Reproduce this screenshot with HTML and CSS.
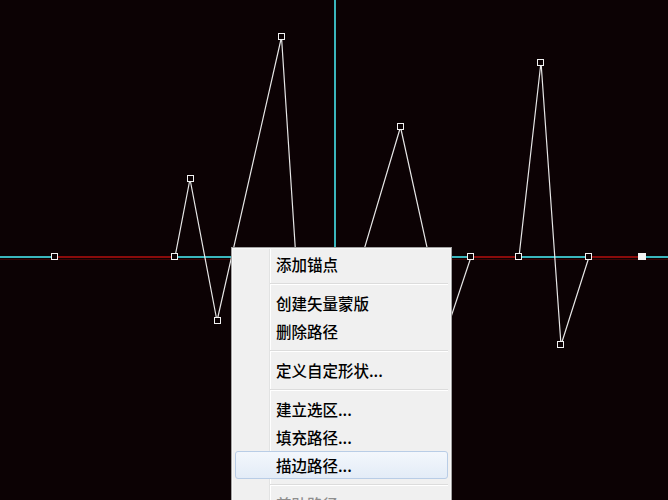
FILE: index.html
```html
<!DOCTYPE html>
<html>

<head>
    <title>Path Context Menu</title>
    <link rel="stylesheet" href="styles.css">
</head>

<body>
    <div class="canvas">
        <!-- Path and guides -->
        <svg class="art" width="668" height="500" viewBox="0 0 668 500">
            <line x1="335" y1="0" x2="335" y2="500" stroke="#3ab6bd" stroke-width="2" />
            <line x1="0" y1="259.5" x2="668" y2="259.5" stroke="#3a0606" stroke-width="1" />
            <line x1="0" y1="257" x2="668" y2="257" stroke="#3ab6bd" stroke-width="2" />
            <line x1="55" y1="257" x2="175" y2="257" stroke="#8a0b0b" stroke-width="2" />
            <line x1="471" y1="257" x2="519" y2="257" stroke="#8a0b0b" stroke-width="2" />
            <line x1="589" y1="257" x2="642" y2="257" stroke="#8a0b0b" stroke-width="2" />

            <g fill="none" stroke="#e6e6e6" stroke-width="1.2">
                <polyline points="175,257 190,179 217,321 281.5,37 298,290" />
                <polyline points="358,270 400.5,127 432,270" />
                <polyline points="471,257 445,335" />
                <polyline points="519,257 541,62 561,345 589,257" />
            </g>

            <g fill="#0c0204" stroke="#f2f2f2" stroke-width="1">
                <rect x="51.5" y="253.5" width="6" height="6" />
                <rect x="171.5" y="253.5" width="6" height="6" />
                <rect x="187.5" y="175.5" width="6" height="6" />
                <rect x="214.5" y="317.5" width="6" height="6" />
                <rect x="278.5" y="33.5" width="6" height="6" />
                <rect x="397.5" y="123.5" width="6" height="6" />
                <rect x="467.5" y="253.5" width="6" height="6" />
                <rect x="515.5" y="253.5" width="6" height="6" />
                <rect x="537.5" y="59.5" width="6" height="6" />
                <rect x="557.5" y="341.5" width="6" height="6" />
                <rect x="585.5" y="253.5" width="6" height="6" />
                <rect x="638.5" y="253.5" width="7" height="6" fill="#f4f4f4" />
            </g>
        </svg>

        <!-- Context menu -->
        <div class="menu">
            <div class="item">添加锚点</div>
            <div class="sep"></div>
            <div class="item">创建矢量蒙版</div>
            <div class="item">删除路径</div>
            <div class="sep"></div>
            <div class="item">定义自定形状...</div>
            <div class="sep"></div>
            <div class="item">建立选区...</div>
            <div class="item">填充路径...</div>
            <div class="item active">描边路径...</div>
            <div class="sep"></div>
            <div class="item disabled">剪贴路径...</div>
        </div>
    </div>
</body>

</html>
```

FILE: styles.css
```css
        body {
            margin: 0;
            background-color: #0c0204;
            font-family: 'Noto Sans CJK SC', 'Noto Sans', sans-serif;
            overflow: hidden;
        }

        .canvas {
            position: relative;
            width: 668px;
            height: 500px;
            overflow: hidden;
        }

        .art {
            position: absolute;
            left: 0;
            top: 0;
        }

        .menu {
            position: absolute;
            left: 231px;
            top: 247px;
            width: 219px;
            padding-top: 2px;
            border: 1px solid #a3a3a3;
            box-shadow: inset 0 0 0 1px #f8f8f8;
            background: linear-gradient(to right, #f0f0f0 37px, #e2e3e3 37px, #e2e3e3 38px, #fff 38px, #fff 39px, #f0f0f0 39px);
        }

        .item {
            height: 28px;
            line-height: 28px;
            margin: 0 3px;
            padding-left: 41px;
            font-size: 15.5px;
            font-weight: 500;
            color: #000;
            white-space: nowrap;
        }

        .item.active {
            height: 26px;
            line-height: 26px;
            padding-left: 40px;
            border: 1px solid #b9cde6;
            border-radius: 3px;
            background: linear-gradient(#f3f7fc, #e3ecf7);
        }

        .item.disabled {
            color: #8e8e8e;
        }

        .sep {
            height: 11px;
            display: flex;
            align-items: center;
            padding-left: 38px;
            margin-right: 3px;
        }

        .sep::after {
            content: '';
            flex: 1;
            height: 1px;
            background-color: #dcdcdc;
            border-bottom: 1px solid #fff;
        }
```
